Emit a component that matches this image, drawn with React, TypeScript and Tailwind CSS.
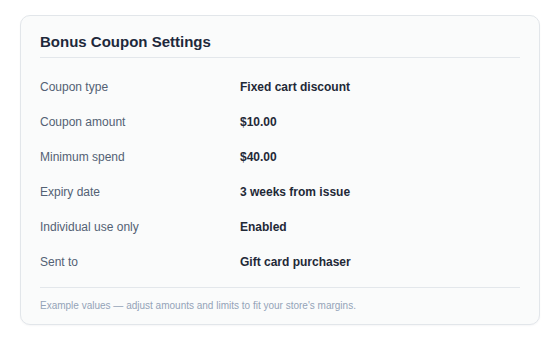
import React from 'react';

const rows: { label: string; value: string }[] = [
    { label: 'Coupon type', value: 'Fixed cart discount' },
    { label: 'Coupon amount', value: '$10.00' },
    { label: 'Minimum spend', value: '$40.00' },
    { label: 'Expiry date', value: '3 weeks from issue' },
    { label: 'Individual use only', value: 'Enabled' },
    { label: 'Sent to', value: 'Gift card purchaser' },
];

const App: React.FC = () => {
    return (
        <div className="w-[560px] h-[340px] bg-white pt-[15px] px-[20px] font-['Liberation_Sans',Arial,sans-serif]">
            <div className="h-[310px] rounded-[10px] border border-[#e2e6ea] bg-[#fafbfb] px-[19px] pt-[16px] shadow-[0_1px_2px_rgba(15,23,42,0.04)]">
                <h2 className="border-b border-[#e3e7eb] pb-[5px] text-[15px] leading-[20px] font-bold text-[#1e293b]">
                    Bonus Coupon Settings
                </h2>
                <div className="pt-[11px]">
                    {rows.map((row) => (
                        <div key={row.label} className="grid h-[35px] grid-cols-[200px_1fr] items-center text-[12px]">
                            <span className="text-[#536174]">{row.label}</span>
                            <span className="font-bold text-[#1f2937]">{row.value}</span>
                        </div>
                    ))}
                </div>
                <div className="mt-[8px] border-t border-[#e3e7eb] pt-[10px] text-[10px] leading-[16px] text-[#94a3b8]">
                    Example values — adjust amounts and limits to fit your store's margins.
                </div>
            </div>
        </div>
    );
};

export default App;
